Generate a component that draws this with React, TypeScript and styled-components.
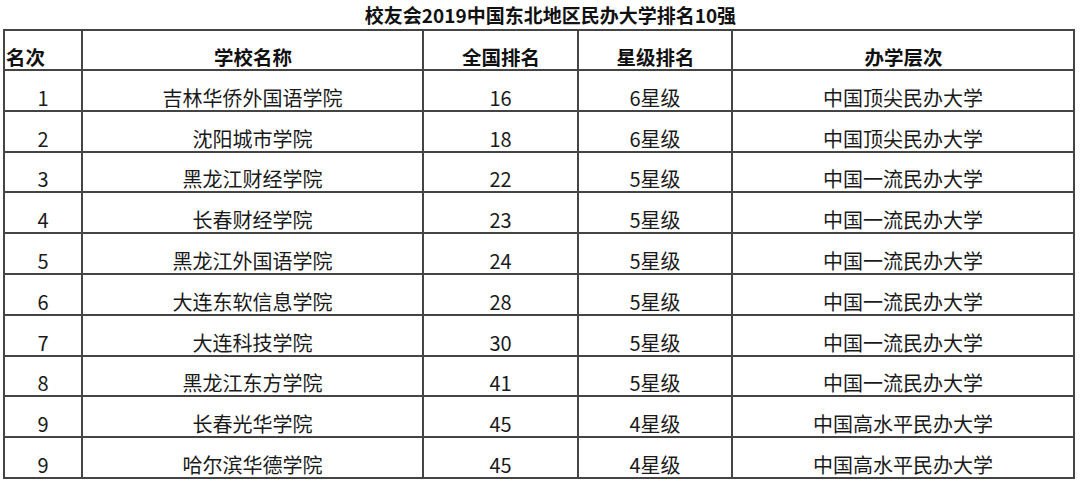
import React from 'react'
import styled, { createGlobalStyle } from 'styled-components'

interface Row {
  rank: string
  school: string
  national: number
  star: string
  level: string
}

const rows: Row[] = [
  { rank: '1', school: '吉林华侨外国语学院', national: 16, star: '6星级', level: '中国顶尖民办大学' },
  { rank: '2', school: '沈阳城市学院', national: 18, star: '6星级', level: '中国顶尖民办大学' },
  { rank: '3', school: '黑龙江财经学院', national: 22, star: '5星级', level: '中国一流民办大学' },
  { rank: '4', school: '长春财经学院', national: 23, star: '5星级', level: '中国一流民办大学' },
  { rank: '5', school: '黑龙江外国语学院', national: 24, star: '5星级', level: '中国一流民办大学' },
  { rank: '6', school: '大连东软信息学院', national: 28, star: '5星级', level: '中国一流民办大学' },
  { rank: '7', school: '大连科技学院', national: 30, star: '5星级', level: '中国一流民办大学' },
  { rank: '8', school: '黑龙江东方学院', national: 41, star: '5星级', level: '中国一流民办大学' },
  { rank: '9', school: '长春光华学院', national: 45, star: '4星级', level: '中国高水平民办大学' },
  { rank: '9', school: '哈尔滨华德学院', national: 45, star: '4星级', level: '中国高水平民办大学' },
]

const GlobalStyle = createGlobalStyle`
  body {
    margin: 0;
    background: #fff;
    font-family: "Noto Sans CJK SC", "Noto Sans", sans-serif;
    color: #111;
  }
`

const Page = styled.div`
  width: 1080px;
  height: 481px;
  padding-left: 3px;
  box-sizing: border-box;
  overflow: hidden;
`

const Title = styled.h1`
  margin: 0;
  height: 29px;
  line-height: 30px;
  font-size: 19px;
  font-weight: 700;
  text-align: center;
  padding-left: 18px;
`

const Table = styled.table`
  border-collapse: collapse;
  table-layout: fixed;
  width: 1072px;
  border: 2px solid #3c3c3c;
`

const HeadCell = styled.th<{ $align?: string }>`
  height: 38px;
  border: 2px solid #444;
  padding: 0 0 0 1px;
  font-size: 19.5px;
  font-weight: 700;
  line-height: 24px;
  text-align: ${(p) => p.$align || 'center'};
  vertical-align: bottom;
`

const Cell = styled.td`
  height: 38.8px;
  border: 2px solid #444;
  padding: 0;
  font-size: 20px;
  line-height: 24px;
  text-align: center;
  vertical-align: bottom;
  color: #1a1a1a;
`

export default function App() {
  return (
    <Page>
      <GlobalStyle />
      <Title>校友会2019中国东北地区民办大学排名10强</Title>
      <Table>
        <colgroup>
          <col style={{ width: 78 }} />
          <col style={{ width: 341 }} />
          <col style={{ width: 155 }} />
          <col style={{ width: 154 }} />
          <col style={{ width: 342 }} />
        </colgroup>
        <thead>
          <tr>
            <HeadCell $align='left'>名次</HeadCell>
            <HeadCell>学校名称</HeadCell>
            <HeadCell>全国排名</HeadCell>
            <HeadCell>星级排名</HeadCell>
            <HeadCell>办学层次</HeadCell>
          </tr>
        </thead>
        <tbody>
          {rows.map((r, i) => (
            <tr key={i}>
              <Cell>{r.rank}</Cell>
              <Cell>{r.school}</Cell>
              <Cell>{r.national}</Cell>
              <Cell>{r.star}</Cell>
              <Cell>{r.level}</Cell>
            </tr>
          ))}
        </tbody>
      </Table>
    </Page>
  )
}
